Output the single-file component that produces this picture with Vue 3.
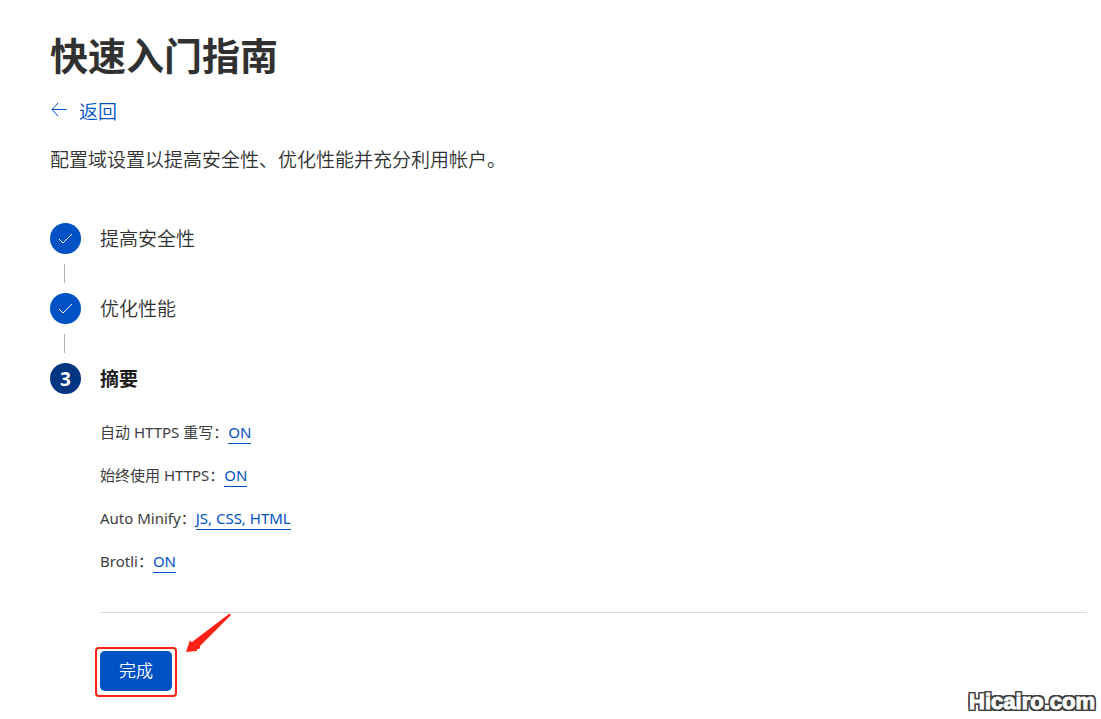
<script setup>
const doneSteps = ['提高安全性', '优化性能']
const settings = [
  { label: '自动 HTTPS 重写：', value: 'ON' },
  { label: '始终使用 HTTPS：', value: 'ON' },
  { label: 'Auto Minify：', value: 'JS, CSS, HTML' },
  { label: 'Brotli：', value: 'ON' },
]
</script>

<template>
  <main class="page">
    <h1>快速入门指南</h1>
    <a class="back" href="#">
      <svg width="17" height="16" viewBox="0 0 17 16" aria-hidden="true">
        <path d="M16.500 7.500H2M8 1L2 7.500l6 6.500" />
      </svg>
      <span>返回</span>
    </a>
    <p class="intro">配置域设置以提高安全性、优化性能并充分利用帐户。</p>

    <ol class="steps">
      <li v-for="step in doneSteps" :key="step" class="step">
        <div class="rail">
          <span class="dot">
            <svg width="15" height="12" viewBox="0 0 15 12" aria-hidden="true">
              <path d="M1 6l4 4 9-9" />
            </svg>
          </span>
          <span class="line"></span>
        </div>
        <div class="name">{{ step }}</div>
      </li>
      <li class="step">
        <div class="rail"><span class="dot current">3</span></div>
        <div class="content">
          <h2 class="name">摘要</h2>
          <ul class="settings">
            <li v-for="item in settings" :key="item.label">
              <span>{{ item.label }}</span><a href="#">{{ item.value }}</a>
            </li>
          </ul>
          <div class="actions">
            <span class="highlight"><button type="button">完成</button></span>
            <svg class="arrow" width="48" height="42" viewBox="0 0 48 42" aria-hidden="true">
              <path d="M45.500 2.500L15 33l0 2 -1 1 -2 0 0 2L1 39 5 27l1 2 1 0L44 1q2-1 1.500 1.500z" />
            </svg>
          </div>
        </div>
      </li>
    </ol>
    <div class="watermark">Hicairo.com</div>
  </main>
</template>

<style>
body {
  margin: 0;
  background: #fff;
}
</style>

<style scoped>
.page {
  box-sizing: border-box;
  position: relative;
  min-height: 100vh;
  padding: 31px 14px 20px 50px;
  color: #313131;
  font-family: "Noto Sans", "Noto Sans CJK SC", sans-serif;
  font-size: 19px;
  line-height: 28px;
}
h1 {
  margin: 0;
  font-size: 38px;
  line-height: 48px;
  font-weight: 700;
}
.back {
  display: inline-flex;
  align-items: center;
  gap: 12px;
  margin-top: 19px;
  color: #0051c3;
  font-weight: 350;
  text-decoration: none;
}
.back svg {
  margin-bottom: 4px;
}
.back path {
  fill: none;
  stroke: currentColor;
}
.intro {
  margin: 20px 0 49px;
  font-weight: 350;
}
.steps,
.settings {
  margin: 0;
  padding: 0;
  list-style: none;
}
.step {
  display: flex;
  gap: 19px;
}
.rail {
  display: flex;
  flex: none;
  flex-direction: column;
  align-items: center;
  width: 31px;
}
.dot {
  display: flex;
  align-items: center;
  justify-content: center;
  width: 31px;
  height: 31px;
  border-radius: 50%;
  background: #0051c3;
  color: #fff;
}
.dot path {
  fill: none;
  stroke: #fff;
}
.current {
  background: #003681;
  font-weight: 700;
  line-height: 24px;
}
.line {
  width: 1px;
  height: 19px;
  margin: 10px 2px 10px 0;
  background: #b3b3b3;
}
.name {
  margin: 0;
  font-size: 19px;
  line-height: 32px;
  font-weight: 350;
}
.content {
  flex: 1;
}
h2.name {
  color: #1d1d1d;
  font-weight: 700;
}
.settings {
  display: flex;
  flex-direction: column;
  gap: 19px;
  padding: 25px 0 39px;
  border-bottom: 1px solid #d9d9d9;
  font-size: 15px;
  line-height: 24px;
}
.settings span {
  color: #3d3d3d;
}
.settings a {
  display: inline-block;
  border-bottom: 1px solid #0051c3;
  color: #0051c3;
  line-height: 22px;
  text-decoration: none;
}
.actions {
  position: relative;
  padding-top: 34px;
}
.highlight {
  display: inline-block;
  margin-left: -5px;
  padding: 2px 3px 4px;
  border: 2px solid #ff2016;
  border-radius: 4px;
}
button {
  display: block;
  padding: 0 19px;
  border: 0;
  border-radius: 5px;
  background: #0051c3;
  color: #fff;
  font: inherit;
  font-size: 17px;
  font-weight: 350;
  line-height: 40px;
}
.arrow {
  position: absolute;
  top: 0;
  left: 85px;
  fill: #ff2016;
}
.watermark {
  position: absolute;
  right: 6px;
  bottom: 5px;
  color: #fff;
  font-family: "Liberation Sans", Arial, sans-serif;
  font-size: 22px;
  font-weight: 700;
  line-height: 24px;
  -webkit-text-stroke: 1px #fff;
  text-shadow: 2px 0 #414141, -2px 0 #414141, 0 2px #414141, 0 -2px #414141,
    2px 2px #414141, -2px 2px #414141, 2px -2px #414141, -2px -2px #414141;
}
</style>
